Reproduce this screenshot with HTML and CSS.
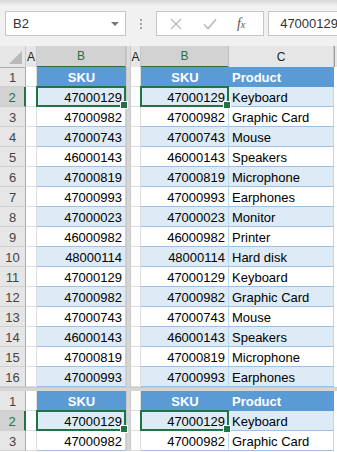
FILE: index.html
```html
<!DOCTYPE html>
<html lang="en">
<head>
  <meta charset="UTF-8">
  <meta name="viewport" content="width=device-width, initial-scale=1.0">
  <title>SKU split panes</title>
  <link rel="stylesheet" href="styles.css">
</head>
<body>
  <div class="toolbar">
    <div class="namebox">
      <span>B2</span>
      <span class="drop"></span>
    </div>
    <div class="grip"><i></i><i></i><i></i></div>
    <div class="fxbox">
      <svg width="12" height="12" viewBox="0 0 12 12"><path d="M1 1 L11 11 M11 1 L1 11" stroke="#b8b8b8" stroke-width="1.3" fill="none"/></svg>
      <svg width="14" height="12" viewBox="0 0 14 12"><path d="M1 6.5 L5 10.5 L13 1.5" stroke="#b8b8b8" stroke-width="1.6" fill="none"/></svg>
      <span class="fx">f<small>x</small></span>
    </div>
    <div class="formula">47000129</div>
  </div>

  <div class="sheet">
    <div class="row colhead">
      <div class="corner"><span class="tri"></span></div>
      <div class="ch">A</div>
      <div class="ch sel">B</div>
      <div class="vs"></div>
      <div class="ch">A</div>
      <div class="ch sel">B</div>
      <div class="ch">C</div>
      <div class="ch end"></div>
    </div>

    <div class="row">
      <div class="rh">1</div><div class="c a"></div><div class="c th ctr">SKU</div><div class="vs"></div><div class="c a"></div><div class="c th ctr">SKU</div><div class="c th">Product</div><div class="c e"></div>
    </div>
    <div class="row band cur">
      <div class="rh">2</div><div class="c a"></div><div class="c t n pick">47000129</div><div class="vs"></div><div class="c a"></div><div class="c t n pick">47000129</div><div class="c t">Keyboard</div><div class="c e"></div>
    </div>
    <div class="row">
      <div class="rh">3</div><div class="c a"></div><div class="c t n">47000982</div><div class="vs"></div><div class="c a"></div><div class="c t n">47000982</div><div class="c t">Graphic Card</div><div class="c e"></div>
    </div>
    <div class="row band">
      <div class="rh">4</div><div class="c a"></div><div class="c t n">47000743</div><div class="vs"></div><div class="c a"></div><div class="c t n">47000743</div><div class="c t">Mouse</div><div class="c e"></div>
    </div>
    <div class="row">
      <div class="rh">5</div><div class="c a"></div><div class="c t n">46000143</div><div class="vs"></div><div class="c a"></div><div class="c t n">46000143</div><div class="c t">Speakers</div><div class="c e"></div>
    </div>
    <div class="row band">
      <div class="rh">6</div><div class="c a"></div><div class="c t n">47000819</div><div class="vs"></div><div class="c a"></div><div class="c t n">47000819</div><div class="c t">Microphone</div><div class="c e"></div>
    </div>
    <div class="row">
      <div class="rh">7</div><div class="c a"></div><div class="c t n">47000993</div><div class="vs"></div><div class="c a"></div><div class="c t n">47000993</div><div class="c t">Earphones</div><div class="c e"></div>
    </div>
    <div class="row band">
      <div class="rh">8</div><div class="c a"></div><div class="c t n">47000023</div><div class="vs"></div><div class="c a"></div><div class="c t n">47000023</div><div class="c t">Monitor</div><div class="c e"></div>
    </div>
    <div class="row">
      <div class="rh">9</div><div class="c a"></div><div class="c t n">46000982</div><div class="vs"></div><div class="c a"></div><div class="c t n">46000982</div><div class="c t">Printer</div><div class="c e"></div>
    </div>
    <div class="row band">
      <div class="rh">10</div><div class="c a"></div><div class="c t n">48000114</div><div class="vs"></div><div class="c a"></div><div class="c t n">48000114</div><div class="c t">Hard disk</div><div class="c e"></div>
    </div>
    <div class="row">
      <div class="rh">11</div><div class="c a"></div><div class="c t n">47000129</div><div class="vs"></div><div class="c a"></div><div class="c t n">47000129</div><div class="c t">Keyboard</div><div class="c e"></div>
    </div>
    <div class="row band">
      <div class="rh">12</div><div class="c a"></div><div class="c t n">47000982</div><div class="vs"></div><div class="c a"></div><div class="c t n">47000982</div><div class="c t">Graphic Card</div><div class="c e"></div>
    </div>
    <div class="row">
      <div class="rh">13</div><div class="c a"></div><div class="c t n">47000743</div><div class="vs"></div><div class="c a"></div><div class="c t n">47000743</div><div class="c t">Mouse</div><div class="c e"></div>
    </div>
    <div class="row band">
      <div class="rh">14</div><div class="c a"></div><div class="c t n">46000143</div><div class="vs"></div><div class="c a"></div><div class="c t n">46000143</div><div class="c t">Speakers</div><div class="c e"></div>
    </div>
    <div class="row">
      <div class="rh">15</div><div class="c a"></div><div class="c t n">47000819</div><div class="vs"></div><div class="c a"></div><div class="c t n">47000819</div><div class="c t">Microphone</div><div class="c e"></div>
    </div>
    <div class="row band">
      <div class="rh">16</div><div class="c a"></div><div class="c t n">47000993</div><div class="vs"></div><div class="c a"></div><div class="c t n">47000993</div><div class="c t">Earphones</div><div class="c e"></div>
    </div>

    <div class="hs"></div>

    <div class="row">
      <div class="rh">1</div><div class="c a"></div><div class="c th ctr">SKU</div><div class="vs"></div><div class="c a"></div><div class="c th ctr">SKU</div><div class="c th">Product</div><div class="c e"></div>
    </div>
    <div class="row band cur">
      <div class="rh">2</div><div class="c a"></div><div class="c t n pick">47000129</div><div class="vs"></div><div class="c a"></div><div class="c t n pick">47000129</div><div class="c t">Keyboard</div><div class="c e"></div>
    </div>
    <div class="row">
      <div class="rh">3</div><div class="c a"></div><div class="c t n">47000982</div><div class="vs"></div><div class="c a"></div><div class="c t n">47000982</div><div class="c t">Graphic Card</div><div class="c e"></div>
    </div>
  </div>
</body>
</html>
```

FILE: styles.css
```css
* {
  margin: 0;
  padding: 0;
  box-sizing: border-box;
}
body {
  font-family: "Liberation Sans", Arial, sans-serif;
  background-color: #fff;
  overflow: hidden;
  color: #000;
}

/* formula bar */
.toolbar {
  height: 46px;
  display: flex;
  align-items: flex-start;
  padding: 11px 0 0 5px;
  background: linear-gradient(#d6d6d6, #f1f1f1 6px, #f1f1f1);
}
.namebox {
  width: 122px;
  height: 25px;
  background-color: #fff;
  border: 1px solid #c6c6c6;
  display: flex;
  align-items: center;
  justify-content: space-between;
  padding: 0 6px 0 7px;
  font-size: 13px;
  color: #333;
}
.drop {
  width: 0;
  height: 0;
  border-left: 4px solid transparent;
  border-right: 4px solid transparent;
  border-top: 4px solid #777;
}
.grip {
  width: 30px;
  height: 25px;
  display: flex;
  flex-direction: column;
  align-items: center;
  justify-content: center;
  gap: 2px;
}
.grip i {
  display: block;
  width: 2px;
  height: 2px;
  background-color: #a6a6a6;
}
.fxbox {
  width: 109px;
  height: 25px;
  background-color: #fff;
  border: 1px solid #c6c6c6;
  display: flex;
  align-items: center;
  padding-left: 13px;
  gap: 21px;
}
.fx {
  font-family: "Liberation Serif", serif;
  font-style: italic;
  font-size: 14px;
  color: #555;
  margin-left: -1px;
}
.fx small {
  font-size: 10px;
}
.formula {
  flex: 1;
  height: 25px;
  margin-left: 4px;
  margin-right: -2px;
  background-color: #fff;
  border: 1px solid #c6c6c6;
  padding-left: 11px;
  font-size: 13px;
  line-height: 23px;
  color: #333;
}

/* grid */
.row {
  display: grid;
  grid-template-columns: 26px 11px 89px 5px 10px 88px 105px 3px;
  height: 20px;
}
.colhead {
  height: 21px;
  background-color: #e6e6e6;
}
.corner {
  position: relative;
  border-right: 1px solid #c8c8c8;
  border-bottom: 1px solid #ababab;
}
.tri {
  position: absolute;
  right: 3px;
  bottom: 3px;
  width: 0;
  height: 0;
  border-left: 13px solid transparent;
  border-bottom: 13px solid #b9b9b9;
}
.ch {
  font-size: 12px;
  text-align: center;
  line-height: 20px;
  padding-top: 1px;
  color: #222;
  border-right: 1px solid #c8c8c8;
  border-bottom: 1px solid #ababab;
}
.ch.sel {
  background-color: #d2d2d2;
  color: #217346;
  border-bottom: 2px solid #217346;
  border-right-color: #bdbdbd;
  line-height: 19px;
}
.ch.end {
  background-color: #e6e6e6;
  border-left: 1px solid #9f9f9f;
  border-right: none;
}
.vs {
  background-color: #d6d6d6;
  border-left: 1px solid #cacaca;
  border-right: 1px solid #cacaca;
}
.colhead .vs {
  background-color: #dcdcdc;
  border-bottom: 1px solid #ababab;
}
.hs {
  height: 4px;
  background-color: #d6d6d6;
  border-top: 1px solid #cacaca;
}
.rh {
  background-color: #e6e6e6;
  color: #444;
  font-size: 13px;
  text-align: center;
  line-height: 16px;
  padding-top: 3px;
  border-right: 1px solid #ababab;
  border-bottom: 1px solid #d0d0d0;
}
.cur .rh {
  background-color: #d2d2d2;
  color: #217346;
  border-right: 2px solid #217346;
}
.c {
  font-size: 13px;
  line-height: 16px;
  padding-top: 3px;
  white-space: nowrap;
  overflow: hidden;
}
.c.a, .c.e {
  background-color: #fff;
  border-right: 1px solid #dedede;
  border-bottom: 1px solid #dedede;
}
.c.e {
  border: none;
}
.c.th {
  background-color: #5b9bd5;
  color: #fff;
  font-weight: bold;
  padding-left: 3px;
  border-bottom: 1px solid #5b9bd5;
}
.c.th.ctr {
  text-align: center;
  padding-left: 0;
}
.c.t {
  padding-left: 3px;
  border-right: 1px solid #bdd7ee;
  border-bottom: 1px solid #9bc2e6;
  background-color: #fff;
}
.band .c.t {
  background-color: #ddebf7;
}
.c.n {
  text-align: right;
  padding-left: 0;
  padding-right: 3px;
}
.pick {
  position: relative;
  overflow: visible;
}
.pick::before {
  content: "";
  position: absolute;
  top: -1px;
  left: -1px;
  right: -1px;
  bottom: -1px;
  border: 2px solid #217346;
  z-index: 2;
}
.pick::after {
  content: "";
  position: absolute;
  right: -3px;
  bottom: -3px;
  width: 6px;
  height: 6px;
  background-color: #217346;
  border: 1px solid #fff;
  z-index: 3;
}
```
